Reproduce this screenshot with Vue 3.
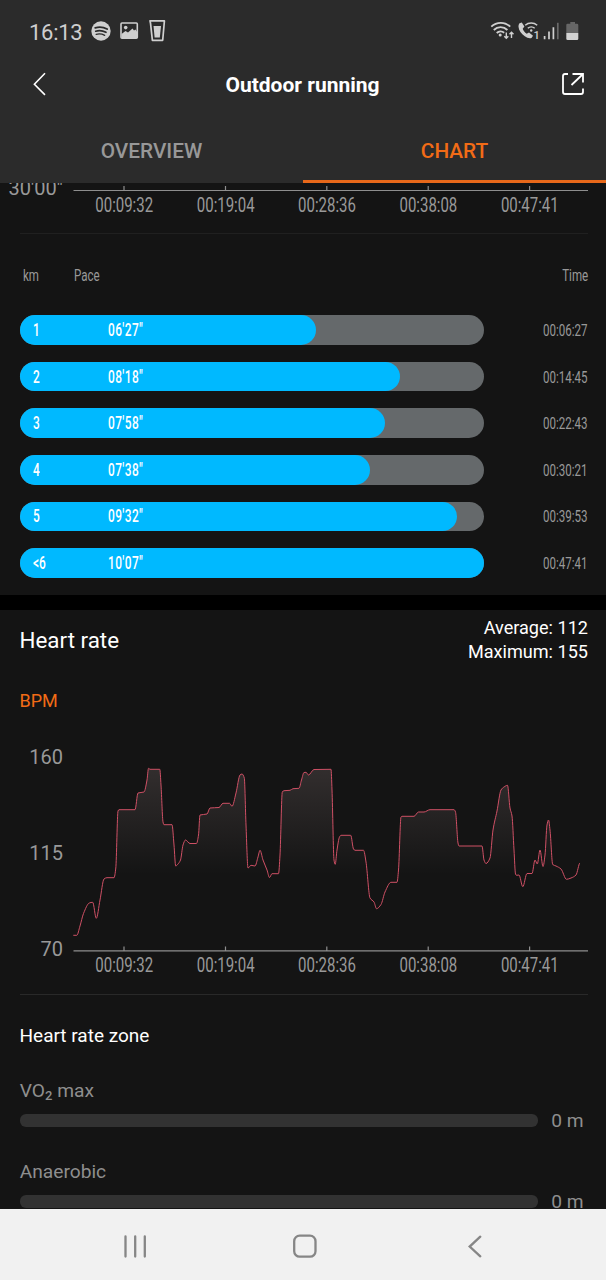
<template>
    <div class="screen">
        <header class="top">
            <div class="status-bar">
                <span class="clock">16:13</span>
                <svg class="status-left" width="80" height="28" viewBox="88 18 80 28">
                    <circle cx="101" cy="31" r="9.7" fill="#cfcfcf" />
                    <g fill="none" stroke="#2b2b2b" stroke-linecap="round">
                        <path d="M95.2 27.8c4-1.2 8.3-.8 11.9 1.2" stroke-width="1.9" />
                        <path d="M95.7 31.2c3.5-1 7.1-.6 10.3 1.1" stroke-width="1.6" />
                        <path d="M96.2 34.3c3-.7 5.8-.4 8.5 1" stroke-width="1.3" />
                    </g>
                    <rect x="121" y="23" width="16.3" height="15.2" rx="1" fill="none" stroke="#cfcfcf" stroke-width="1.6" />
                    <circle cx="125.7" cy="27.6" r="1.8" fill="#cfcfcf" />
                    <path d="M121.5 34l4-3 2.500 1.500 4.500-4 1.500 2 1.500-1 1.700 2.500v6h-15.700z" fill="#cfcfcf" />
                    <path d="M150 20.900h14.400l-.2 2.300-1.500 17.100h-10.300l-1.900-17.100z" fill="none" stroke="#cfcfcf" stroke-width="1.7" stroke-linejoin="round" />
                    <path d="M153.500 26h7.500l-1.200 11.500h-5.200z" fill="#cfcfcf" />
                </svg>
                <svg class="status-right" width="92" height="28" viewBox="488 18 92 28">
                    <g fill="none" stroke="#cfcfcf" stroke-width="1.8">
                        <path d="M491.300 26.700a13.500 13.500 0 0 1 18.900 0" />
                        <path d="M493.800 30a9.600 9.600 0 0 1 13.600 0" />
                        <path d="M496.700 33a5.600 5.600 0 0 1 7.500-.2" />
                    </g>
                    <circle cx="500.2" cy="35" r="1.5" fill="#cfcfcf" />
                    <path d="M506.300 32.500v5.700m-2-2l2 2 2-2M511.500 38v-5.700m-2 2l2-2 2 2" fill="none" stroke="#cfcfcf" stroke-width="1.4" />
                    <path d="M519.500 23.300l2.300-.9 2.600 4.200-1.700 2.200c.8 2.200 2 3.700 4 5l2.300-1.200 4 3.100-1.500 2.200c-1.600.9-4.400.1-6.700-1.600-3.500-2.600-6-6-6.300-9.600 0-1.500.3-2.600 1-3.400z" fill="#cfcfcf" />
                    <g fill="none" stroke="#cfcfcf" stroke-width="1.5">
                        <path d="M525.200 25.300a9 9 0 0 1 12 0" />
                        <path d="M527.800 28.300a5.200 5.200 0 0 1 6.900 0" />
                    </g>
                    <circle cx="531.2" cy="30.5" r="1.2" fill="#cfcfcf" />
                    <text x="533.4" y="38.7" class="sim">1</text>
                    <path d="M544.600 36v3.300M549 31.600v7.700M553.400 27.300v12" stroke="#cfcfcf" stroke-width="1.7" />
                    <path d="M557.800 22.800v16.500" stroke="#6a6a6a" stroke-width="1.7" />
                    <path d="M570.300 22h4.700v1.700h2q1.300 0 1.300 1.300v8h-12v-8q0-1.300 1.300-1.300h2.700z" fill="#666" />
                    <path d="M566.300 33h12v5.700q0 1.300-1.300 1.300h-9.400q-1.300 0-1.300-1.300z" fill="#d2d2d2" />
                </svg>
            </div>
            <div class="title-bar">
                <svg width="16" height="24" viewBox="0 0 16 24">
                    <path d="M13 1.300L2.400 12.200l10.600 10.700" fill="none" stroke="#fff" stroke-width="1.6" />
                </svg>
                <h1>Outdoor running</h1>
                <svg width="24" height="24" viewBox="0 0 24 24">
                    <path d="M7 2H4Q2 2 2 4v16q0 2 2 2h16q2 0 2-2v-3.500M11.500 2H22v8.500M21.500 2.500L10.500 13" fill="none" stroke="#fff" stroke-width="1.800" />
                </svg>
            </div>
            <nav class="tabs">
                <div class="tab">OVERVIEW</div>
                <div class="tab active">CHART</div>
            </nav>
        </header>

        <section class="pace">
            <svg class="chart" width="606" height="50" viewBox="0 183 606 50">
                <text x="8.5" y="195.4" class="scale" textLength="54.5">30'00"</text>
                <path d="M73.500 190.500H588" class="axis" />
                <g v-for="tick in ticks" :key="tick.label">
                    <path :d="`M${tick.x} 186v4.500`" class="axis" />
                    <text :x="tick.x - 28.7" y="211.8" class="tick" textLength="57.8" lengthAdjust="spacingAndGlyphs">{{ tick.label }}</text>
                </g>
            </svg>
            <div class="divider"></div>
            <div class="pace-head">
                <span class="narrow km">km</span>
                <span class="narrow">Pace</span>
                <span class="narrow right">Time</span>
            </div>
            <div class="pace-list">
                <div class="pace-row" v-for="split in splits" :key="split.km">
                    <div class="track">
                        <div class="fill" :style="{ width: split.width + 'px' }">
                            <span class="narrow split-km">{{ split.km }}</span>
                            <span class="narrow split-pace">{{ split.pace }}</span>
                        </div>
                    </div>
                    <span class="narrow right">{{ split.time }}</span>
                </div>
            </div>
        </section>

        <section class="heart">
            <div class="heart-head">
                <h2>Heart rate</h2>
                <div class="summary">
                    <div>Average: 112</div>
                    <div>Maximum: 155</div>
                </div>
            </div>
            <div class="unit">BPM</div>
            <svg class="chart" width="606" height="254" viewBox="0 740 606 254">
                <defs>
                    <linearGradient id="area" gradientUnits="userSpaceOnUse" x1="0" y1="768" x2="0" y2="875">
                        <stop offset="0" stop-color="#ffdcdc" stop-opacity=".13" />
                        <stop offset="1" stop-color="#ffdcdc" stop-opacity="0" />
                    </linearGradient>
                </defs>
                <text x="63" y="764.3" class="scale" text-anchor="end">160</text>
                <text x="63" y="860" class="scale" text-anchor="end">115</text>
                <text x="63" y="955.7" class="scale" text-anchor="end">70</text>
                <path :d="heartLine + 'V950H73.3Z'" fill="url(#area)" />
                <path :d="heartLine" class="heart-line" />
                <path d="M73.500 950.800H588" class="axis" />
                <g v-for="tick in ticks" :key="tick.label">
                    <path :d="`M${tick.x} 946.500v4.500`" class="axis" />
                    <text :x="tick.x - 28.7" y="972.3" class="tick" textLength="57.8" lengthAdjust="spacingAndGlyphs">{{ tick.label }}</text>
                </g>
            </svg>
            <div class="divider light"></div>
            <h3>Heart rate zone</h3>
            <div class="zone">
                <div class="zone-name">VO<span class="sub">2</span> max</div>
                <div class="zone-row">
                    <div class="zone-bar"></div>
                    <span>0 m</span>
                </div>
            </div>
            <div class="zone">
                <div class="zone-name">Anaerobic</div>
                <div class="zone-row">
                    <div class="zone-bar"></div>
                    <span>0 m</span>
                </div>
            </div>
        </section>

        <footer class="nav-bar">
            <svg width="606" height="71" viewBox="0 1209 606 71" fill="none" stroke="#868686" stroke-width="2.3" stroke-linecap="round">
                <path d="M125.500 1236.500v20M135.200 1236.500v20M144.800 1236.500v20" />
                <rect x="294.2" y="1235.7" width="21.3" height="21" rx="5.5" />
                <path d="M480.300 1236.700l-10.600 9.900 10.600 9.700" />
            </svg>
        </footer>
    </div>
</template>

<script setup>
const ticks = [
    { x: 124, label: '00:09:32' },
    { x: 225.5, label: '00:19:04' },
    { x: 326.8, label: '00:28:36' },
    { x: 428.2, label: '00:38:08' },
    { x: 529.6, label: '00:47:41' }
];

const splits = [
    { km: '1', pace: '06\'27"', time: '00:06:27', width: 296 },
    { km: '2', pace: '08\'18"', time: '00:14:45', width: 380.5 },
    { km: '3', pace: '07\'58"', time: '00:22:43', width: 365.5 },
    { km: '4', pace: '07\'38"', time: '00:30:21', width: 350 },
    { km: '5', pace: '09\'32"', time: '00:39:53', width: 437.5 },
    { km: '<6', pace: '10\'07"', time: '00:47:41', width: 464.6 }
];

const heartPoints = [
    [73.3, 935.3], [76.8, 935.3], [80, 926], [83.5, 913.5], [89.3, 903], [92.7, 902.3], [96.3, 918.3],
    [100, 900], [104, 879], [107, 877.7], [114, 877.7], [115.8, 868], [118, 811], [119, 809.7],
    [135, 809.7], [138, 793], [144, 792], [147, 780], [148.5, 768.3], [150, 769.3], [159.8, 769.3],
    [161, 785], [163, 822], [164, 824.7], [172, 824.7], [174, 845], [175.7, 866], [178, 864],
    [180.5, 860], [183, 845], [185.5, 840], [190, 843.5], [196.5, 843.5], [198.5, 835], [200, 815],
    [207, 814], [210, 808], [219, 807.5], [223, 803.3], [229.5, 803.3], [232, 806.3], [236, 793],
    [240, 775], [242, 774], [244.3, 778], [246, 825], [248, 868], [251, 865.3], [255, 866],
    [258, 857], [260, 850.3], [263, 860], [267, 870], [269.5, 877.5], [272, 873.7], [278.5, 873.7],
    [280, 855], [282.3, 792], [284, 790.7], [290, 790.3], [293, 788.7], [299, 788.3], [301.5, 780],
    [304, 772.5], [306, 772.3], [308.5, 775], [314, 769.5], [331, 769.3], [332, 790], [334, 860],
    [335.2, 864.3], [337, 850], [339.5, 837], [341, 835.3], [350.7, 835.3], [353.5, 849],
    [355, 850.3], [363.5, 850.3], [366, 862], [370, 898], [374, 902], [376.5, 908.7], [381, 904.5],
    [385, 892], [391, 882.3], [397, 882.3], [398.5, 870], [401, 817], [402, 816.3], [414, 816.3],
    [418.5, 812], [424, 812], [430, 809.7], [454, 809.7], [455.5, 812], [458, 843], [459, 846],
    [482, 846], [484, 860], [486, 863.5], [490, 858], [493, 830], [497, 811], [501, 790],
    [504, 787], [507.5, 785.3], [510, 808], [512, 816], [514, 850], [515.5, 874], [516.5, 875.3],
    [519, 875], [522.8, 886.7], [527, 873.5], [532, 873.5], [535, 860], [537.3, 864], [540, 850],
    [543, 866.5], [545, 855], [547, 825], [548.5, 820], [550, 830], [552.7, 864.5], [556, 866],
    [561, 869], [566.5, 879.3], [571, 878], [576, 875], [580, 863]
];

// Monotone curve: the tangent is flat at every peak and plateau
function buildLine(points) {
    const slope = (a, b) => (b[1] - a[1]) / (b[0] - a[0]);
    const tangents = points.map((point, i) => {
        if (i === 0 || i === points.length - 1) return 0;
        const before = slope(points[i - 1], point);
        const after = slope(point, points[i + 1]);
        return before * after <= 0 ? 0 : (2 * before * after) / (before + after);
    });
    let d = `M${points[0][0]} ${points[0][1]}`;
    for (let i = 1; i < points.length; i++) {
        const [x0, y0] = points[i - 1];
        const [x1, y1] = points[i];
        const h = (x1 - x0) / 3;
        d += `C${x0 + h} ${y0 + h * tangents[i - 1]} ${x1 - h} ${y1 - h * tangents[i]} ${x1} ${y1}`;
    }
    return d;
}

const heartLine = buildLine(heartPoints);
</script>

<style>
body {
    margin: 0;
    background: #000;
}
</style>

<style scoped>
.screen {
    width: 606px;
    height: 1280px;
    overflow: hidden;
    background: #000;
    color: #fff;
    font-family: Roboto, "Liberation Sans", sans-serif;
    display: flex;
    flex-direction: column;
}

.top {
    height: 183px;
    flex: none;
    background: #2b2b2b;
}

.status-bar {
    height: 64px;
    display: flex;
    align-items: center;
    padding: 0 26px 0 29px;
}

.clock {
    width: 59px;
    font-size: 22px;
    letter-spacing: -0.3px;
    color: #cfcfcf;
}

.status-right {
    margin-left: auto;
}

.sim {
    font-size: 11px;
    font-weight: 500;
    fill: #cfcfcf;
}

.title-bar {
    height: 41px;
    display: flex;
    align-items: center;
    justify-content: space-between;
    padding: 0 21px 0 32px;
}

.title-bar svg {
    margin-bottom: 2px;
}

h1 {
    margin: 0 0 0 -4px;
    font-size: 21px;
    font-weight: 700;
}

.tabs {
    height: 78px;
    display: flex;
}

.tab {
    flex: 1;
    box-sizing: border-box;
    padding-top: 14px;
    line-height: 64px;
    text-align: center;
    font-size: 20.8px;
    font-weight: 500;
    color: #989898;
}

.tab.active {
    color: #f26b16;
    box-shadow: inset 0 -3px #e8681a;
}

.pace {
    height: 412px;
    flex: none;
    background: #141414;
}

.chart {
    display: block;
}

.axis {
    stroke: #8e8e8e;
    stroke-width: 1.2;
    fill: none;
}

.tick {
    font-size: 20.6px;
    fill: #999;
}

.scale {
    font-size: 20px;
    fill: #999;
}

.heart-line {
    fill: none;
    stroke: #cf5065;
    stroke-width: 1;
    stroke-linejoin: round;
}

.divider {
    height: 1px;
    margin: 0 18px 0 20px;
    background: #202020;
}

.divider.light {
    background: #292929;
}

/* tall narrow numerals */
.narrow {
    display: inline-block;
    font-size: 17px;
    color: #999;
    transform: scaleX(0.68);
    transform-origin: left center;
    white-space: nowrap;
}

.narrow.right {
    transform-origin: right center;
    margin-left: auto;
}

.pace-head {
    height: 81.3px;
    display: flex;
    align-items: center;
    padding: 0 18px 0 22.5px;
}

.km {
    width: 51px;
}

.pace-list {
    display: flex;
    flex-direction: column;
    gap: 17.1px;
    padding: 0 18px 0 19.7px;
}

.pace-row {
    height: 29.5px;
    display: flex;
    align-items: center;
}

.track {
    width: 464.6px;
    height: 29.5px;
    border-radius: 15px;
    background: #65696b;
}

.fill {
    height: 29.5px;
    border-radius: 15px;
    background: #00b9ff;
    display: flex;
    align-items: center;
}

.split-km,
.split-pace {
    color: #fff;
    font-size: 17.5px;
    font-weight: 500;
}

.split-pace {
    letter-spacing: 0.6px;
}

.split-km {
    width: 75px;
    margin-left: 13.5px;
}

.heart {
    height: 599px;
    flex: none;
    margin-top: 15px;
    background: #141414;
    overflow: hidden;
}

.heart-head {
    height: 60px;
    display: flex;
    align-items: center;
    justify-content: space-between;
    padding: 0 18px 0 19.5px;
}

h2 {
    margin: 0;
    font-size: 22.4px;
    font-weight: 400;
}

.summary {
    font-size: 18.1px;
    line-height: 24px;
    text-align: right;
}

.unit {
    height: 70px;
    box-sizing: border-box;
    padding: 20px 0 0 19.5px;
    font-size: 18px;
    line-height: 22px;
    color: #f26b16;
}

h3 {
    margin: 0;
    padding: 30px 0 0 19.5px;
    font-size: 19px;
    font-weight: 400;
    line-height: 22px;
}

.zone {
    height: 81px;
    box-sizing: border-box;
    padding: 33px 0 0 19.7px;
    font-size: 19.2px;
    color: #8e8e8e;
}

.zone-name {
    height: 22px;
    line-height: 22px;
}

.sub {
    font-size: 13px;
    font-weight: 500;
    line-height: 1;
    position: relative;
    top: 3px;
}

.zone-row {
    height: 37px;
    display: flex;
    align-items: center;
    gap: 13.5px;
}

.zone-bar {
    width: 518px;
    height: 13px;
    border-radius: 6px;
    background: #323232;
}

.nav-bar {
    height: 71px;
    flex: none;
    background: #f1f1f1;
}
</style>
